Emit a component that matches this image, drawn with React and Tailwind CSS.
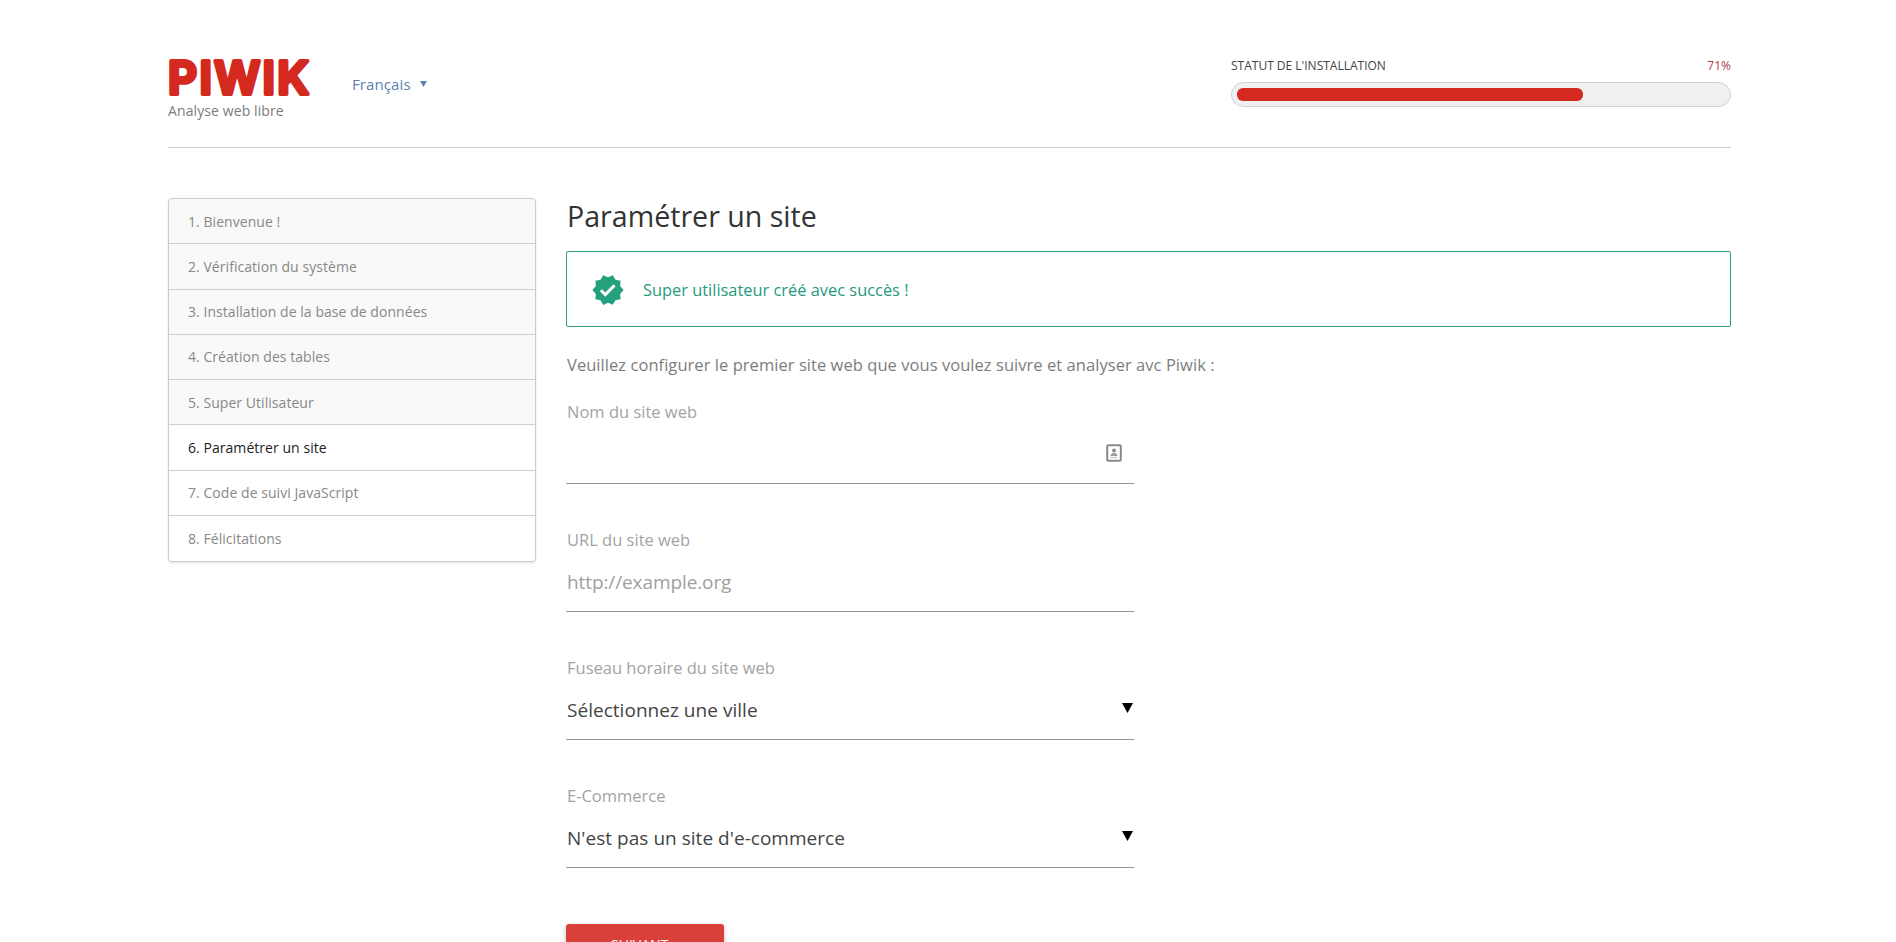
import { MdVerified } from 'react-icons/md'

const font = { fontFamily: '"Open Sans", "Noto Sans", sans-serif' }

const steps = [
  '1. Bienvenue !',
  '2. Vérification du système',
  '3. Installation de la base de données',
  '4. Création des tables',
  '5. Super Utilisateur',
  '6. Paramétrer un site',
  '7. Code de suivi JavaScript',
  '8. Félicitations',
]

function Logo() {
  return (
    <svg width="142" height="60" viewBox="0 0 142 60" className="block -mt-[10px] -mb-[10px]">
      <text
        x="0"
        y="45"
        textLength="141"
        lengthAdjust="spacing"
        fill="#d4291f"
        stroke="#d4291f"
        strokeWidth="4"
        strokeLinejoin="round"
        fontFamily="Inter, sans-serif"
        fontWeight="600"
        fontSize="45"
      >
        PIWIK
      </text>
    </svg>
  )
}

function Triangle({ className }) {
  return (
    <svg viewBox="0 0 10 9" className={className}>
      <path d="M0 0h10L5 9z" fill="currentColor" />
    </svg>
  )
}

function Field({ label, value, placeholder, icon, select }) {
  return (
    <div className="w-[568px] h-[128px]">
      <p className="text-[16.5px] leading-[22px] pt-[1px] pl-[1px] h-[23px] text-[#a3a3a3]">{label}</p>
      <div className="relative h-[50px] mt-[11px] border-b border-[#949494] flex items-center">
        {value && <span className="text-[19px] text-[#444] pl-[1px] tracking-[0.03px] -mt-[8px]">{value}</span>}
        {placeholder && <span className="text-[19px] text-[#a0a0a0] pl-[1px] tracking-[-0.1px] -mt-[8px]">{placeholder}</span>}
        {select && <Triangle className="absolute right-[1px] top-[13px] w-[11px] h-[10px] text-black" />}
        {icon && (
          <svg viewBox="0 0 16 18" className="absolute right-[12px] top-[10px] w-[16px] h-[18px]">
            <rect x="1.2" y="1.2" width="13.6" height="15.6" rx="1" fill="none" stroke="#8a8a8a" strokeWidth="2" />
            <circle cx="8" cy="6.5" r="2" fill="#8a8a8a" />
            <path d="M4.5 12c0-2 1.5-3 3.5-3s3.5 1 3.5 3z" fill="#9a9a9a" />
            <path d="M4.5 13.5h7" stroke="#bbb" strokeWidth="1" />
          </svg>
        )}
      </div>
    </div>
  )
}

export default function App() {
  return (
    <div className="h-[942px] overflow-hidden bg-white px-[168px]" style={font}>
      <header className="w-[1563px] h-[148px] border-b border-[#cfcfcf] flex items-start justify-between pt-[59px]">
        <div className="flex items-start">
          <div className="w-[184px]">
            <Logo />
            <p className="text-[14px] leading-[18px] text-[#7d7d7d] tracking-[0.1px] mt-[3px]">Analyse web libre</p>
          </div>
          <div className="flex items-center gap-[9px] mt-[15px]">
            <span className="text-[15px] leading-[20px] text-[#5a7fb2] tracking-[0.1px]">Français</span>
            <Triangle className="w-[7px] h-[6px] text-[#5a7fb2]" />
          </div>
        </div>
        <div className="w-[500px] -mt-[1px]">
          <div className="flex justify-between text-[12px] leading-[16px]">
            <span className="text-[#444]">STATUT DE L'INSTALLATION</span>
            <span className="text-[#b5394a]">71%</span>
          </div>
          <div className="h-[25px] mt-[8px] p-[5px] rounded-full bg-[#f1f0f0] border border-[#cfd3d6]">
            <div className="h-[13px] w-[346px] rounded-[6px] bg-[#d4291f]" />
          </div>
        </div>
      </header>

      <div className="flex w-[1563px] mt-[50px] gap-[30px]">
        <nav className="w-[368px] h-[364px] shrink-0 rounded-[4px] border border-[#cccccc] bg-[#f9f9f9] shadow-[0_1px_2px_rgba(0,0,0,0.12)] overflow-hidden divide-y divide-[#cfcfcf]">
          {steps.map((step, i) => (
            <div
              key={step}
              className={
                i === 5
                  ? 'h-[45.25px] pl-[19px] flex items-center text-[14px] tracking-[0.05px] bg-white text-[#222]'
                  : i > 5
                    ? 'h-[45.25px] pl-[19px] flex items-center text-[14px] tracking-[0.05px] bg-white text-[#888]'
                    : 'h-[45.25px] pl-[19px] flex items-center text-[14px] tracking-[0.05px] text-[#888]'
              }
            >
              {step}
            </div>
          ))}
        </nav>

        <main className="flex-1 min-w-0">
          <h2 className="text-[28.6px] leading-[38px] pl-[1px] text-[#333] -mt-[1px] mb-[16px]">Paramétrer un site</h2>
          <div className="h-[76px] rounded-[2px] border border-[#2a9a83] flex items-center pl-[25px]">
            <MdVerified className="w-[34px] h-[34px] text-[#24a07f] -ml-[1px] mt-[1px]" />
            <span className="ml-[18px] mt-[2px] text-[16.4px] text-[#1f9a7d]">Super utilisateur créé avec succès !</span>
          </div>
          <p className="mt-[27px] pl-[1px] text-[16.5px] leading-[22px] text-[#7d7d7d] tracking-[0.05px]">
            Veuillez configurer le premier site web que vous voulez suivre et analyser avc Piwik :
          </p>
          <div className="mt-[24px]">
            <Field label="Nom du site web" icon />
            <Field label="URL du site web" placeholder="http://example.org" />
            <Field label="Fuseau horaire du site web" value="Sélectionnez une ville" select />
            <Field label="E-Commerce" value="N'est pas un site d'e-commerce" select />
          </div>
          <button className="w-[158px] h-[40px] mt-[12px] rounded-[3px] bg-[#d9403a] text-white text-[14px] shadow-[0_2px_5px_rgba(0,0,0,0.25)]">
            SUIVANT »
          </button>
        </main>
      </div>
    </div>
  )
}
